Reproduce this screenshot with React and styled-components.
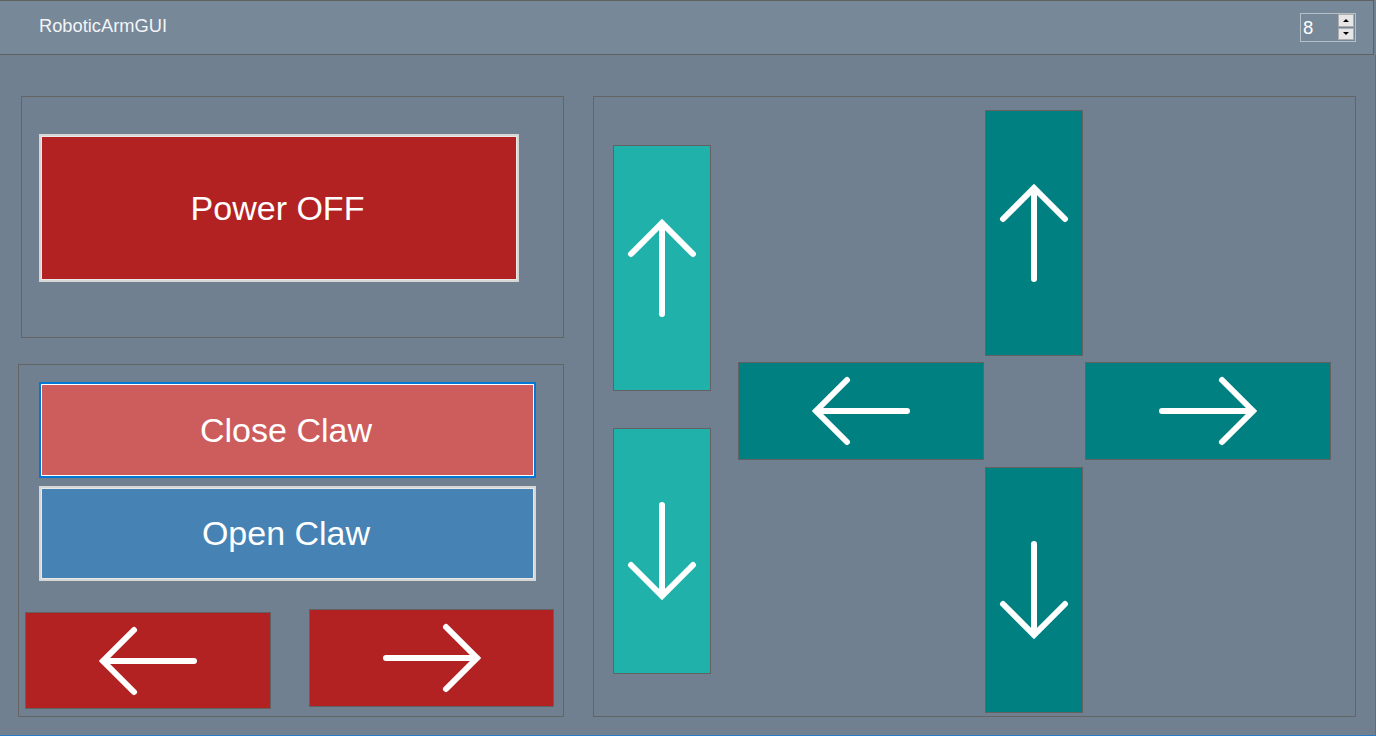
import React from "react";
import styled, { createGlobalStyle } from "styled-components";

const Global = createGlobalStyle`
  html, body { margin: 0; padding: 0; background: #708090; }
  body { font-family: "Liberation Sans", Arial, sans-serif; overflow: hidden; }
  * { box-sizing: border-box; }
`;

const Window = styled.div`
  width: 1376px;
  height: 736px;
  background: #708090;
  display: flex;
  flex-direction: column;
`;

const TitleBar = styled.div`
  height: 55px;
  margin-right: 2px;
  background: #778899;
  border-top: 1px solid #606060;
  border-right: 1px solid #606060;
  border-bottom: 1px solid #606060;
  display: flex;
  align-items: center;
  justify-content: space-between;
  padding: 0 17px 0 39px;
`;

const Title = styled.div`
  color: #f2f4f6;
  font-size: 18.3px;
  line-height: 20px;
  margin-top: -4px;
`;

const SpinBox = styled.div`
  width: 56px;
  height: 29px;
  border: 1px solid #b6bec6;
  display: flex;
  align-items: stretch;
  justify-content: space-between;
`;

const SpinValue = styled.div`
  color: #ffffff;
  font-size: 18.5px;
  line-height: 27px;
  padding-left: 2px;
`;

const SpinButtons = styled.div`
  width: 16px;
  margin: 0 1px 1px 0;
  display: flex;
  flex-direction: column;
  gap: 1px;
`;

const SpinButton = styled.div`
  flex: 1;
  background: #e6e6e6;
  border: 1px solid #adadad;
  display: flex;
  align-items: center;
  justify-content: center;
  &::after {
    content: "";
    width: 0;
    height: 0;
    border-left: 3px solid transparent;
    border-right: 3px solid transparent;
    ${(p) =>
      p.$down
        ? "border-top: 3px solid #000;"
        : "border-bottom: 3px solid #000;"}
  }
`;

const Main = styled.div`
  flex: 1;
  display: flex;
  align-items: flex-start;
  gap: 29px;
  padding: 41px 0 0 18px;
  border-right: 1px solid #2a7bc4;
  border-bottom: 1px solid #2a7bc4;
`;

const LeftColumn = styled.div`
  width: 546px;
  display: flex;
  flex-direction: column;
  align-items: flex-end;
  gap: 26px;
`;

const Panel = styled.div`
  width: ${(p) => p.$w}px;
  height: ${(p) => p.$h}px;
  border: 1px solid #646464;
`;

const PowerPanel = styled(Panel)`
  padding: 37px 0 0 17px;
`;

const ClawPanel = styled(Panel)`
  padding-top: 17px;
  display: flex;
  flex-direction: column;
`;

const ClawStack = styled.div`
  padding-left: 20px;
  display: flex;
  flex-direction: column;
  gap: 8px;
`;

const TextButton = styled.div`
  width: ${(p) => p.$w}px;
  height: ${(p) => p.$h}px;
  background: ${(p) => p.$bg};
  border: 2px solid ${(p) => (p.$focus ? "#0078d7" : "#d6d6d6")};
  box-shadow: inset 0 0 0 1px ${(p) => (p.$focus ? "#ffffff" : "#e8e8e8")};
  color: #ffffff;
  font-size: 34px;
  display: flex;
  align-items: center;
  justify-content: center;
  padding: 0 3px 0 0;
`;

const ArrowRow = styled.div`
  margin-top: 28px;
  padding-left: 6px;
  display: flex;
  align-items: flex-start;
  gap: 38px;
`;

const ArrowButton = styled.div`
  width: ${(p) => p.$w}px;
  height: ${(p) => p.$h}px;
  margin-top: ${(p) => p.$mt || 0}px;
  background: ${(p) => p.$bg};
  border: 1px solid #626262;
  display: flex;
  align-items: center;
  justify-content: center;
`;

const MotionPanel = styled(Panel)`
  padding: 13px 0 0 19px;
  display: flex;
  align-items: flex-start;
  gap: 27px;
`;

const WristColumn = styled.div`
  margin-top: 35px;
  display: flex;
  flex-direction: column;
  gap: 37px;
`;

const Cross = styled.div`
  display: grid;
  grid-template-columns: 246px 99px 246px;
  grid-template-rows: 252px 105px 246px;
  column-gap: 1px;
  align-items: start;
  justify-items: start;
`;

const Cell = styled.div`
  grid-column: ${(p) => p.$c};
  grid-row: ${(p) => p.$r};
`;

const PATHS = {
  up: { vb: "0 0 72 104", d: "M36 98 V7 M5 38 L36 7 L67 38", w: 72, h: 104 },
  down: { vb: "0 0 72 104", d: "M36 6 V97 M5 66 L36 97 L67 66", w: 72, h: 104 },
  left: { vb: "0 0 104 72", d: "M98 36 H7 M38 5 L7 36 L38 67", w: 104, h: 72 },
  right: { vb: "0 0 104 72", d: "M6 36 H97 M66 5 L97 36 L66 67", w: 104, h: 72 },
};

const Arrow = ({ dir }) => {
  const p = PATHS[dir];
  return (
    <svg width={p.w} height={p.h} viewBox={p.vb} style={{ overflow: "visible" }}>
      <path
        d={p.d}
        fill="none"
        stroke="#ffffff"
        strokeWidth="6"
        strokeLinecap="round"
        strokeLinejoin="miter"
      />
    </svg>
  );
};

export default function App() {
  return (
    <Window>
      <Global />
      <TitleBar>
        <Title>RoboticArmGUI</Title>
        <SpinBox>
          <SpinValue>8</SpinValue>
          <SpinButtons>
            <SpinButton />
            <SpinButton $down />
          </SpinButtons>
        </SpinBox>
      </TitleBar>
      <Main>
        <LeftColumn>
          <PowerPanel $w={543} $h={242}>
            <TextButton $w={480} $h={148} $bg="#b22222">
              Power OFF
            </TextButton>
          </PowerPanel>
          <ClawPanel $w={546} $h={353}>
            <ClawStack>
              <TextButton $w={497} $h={96} $bg="#cd5c5c" $focus>
                Close Claw
              </TextButton>
              <TextButton $w={497} $h={95} $bg="#4682b4">
                Open Claw
              </TextButton>
            </ClawStack>
            <ArrowRow>
              <ArrowButton $w={246} $h={97} $mt={3} $bg="#b22222">
                <Arrow dir="left" />
              </ArrowButton>
              <ArrowButton $w={245} $h={98} $bg="#b22222">
                <Arrow dir="right" />
              </ArrowButton>
            </ArrowRow>
          </ClawPanel>
        </LeftColumn>
        <MotionPanel $w={763} $h={621}>
          <WristColumn>
            <ArrowButton $w={98} $h={246} $bg="#20b2aa">
              <Arrow dir="up" />
            </ArrowButton>
            <ArrowButton $w={98} $h={246} $bg="#20b2aa">
              <Arrow dir="down" />
            </ArrowButton>
          </WristColumn>
          <Cross>
            <Cell $c={2} $r={1}>
              <ArrowButton $w={98} $h={246} $bg="#008080">
                <Arrow dir="up" />
              </ArrowButton>
            </Cell>
            <Cell $c={1} $r={2}>
              <ArrowButton $w={246} $h={98} $bg="#008080">
                <Arrow dir="left" />
              </ArrowButton>
            </Cell>
            <Cell $c={3} $r={2}>
              <ArrowButton $w={246} $h={98} $bg="#008080">
                <Arrow dir="right" />
              </ArrowButton>
            </Cell>
            <Cell $c={2} $r={3}>
              <ArrowButton $w={98} $h={246} $bg="#008080">
                <Arrow dir="down" />
              </ArrowButton>
            </Cell>
          </Cross>
        </MotionPanel>
      </Main>
    </Window>
  );
}
